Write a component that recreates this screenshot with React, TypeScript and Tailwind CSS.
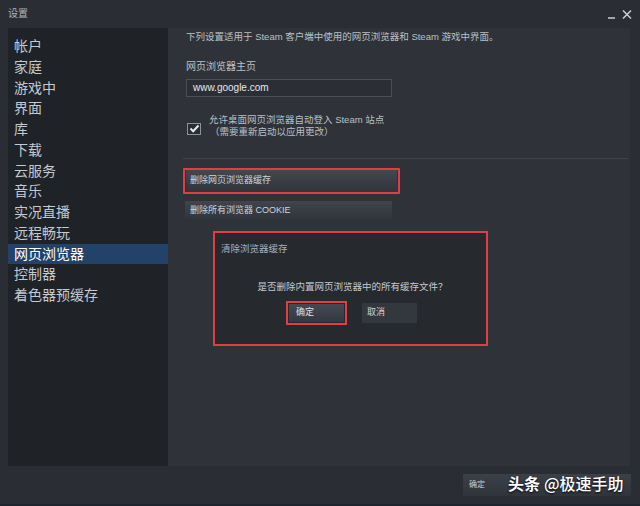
import React from "react";

const FONT = "font-['Liberation_Sans','Noto_Sans_CJK_SC',sans-serif]";

const navItems = [
  "帐户",
  "家庭",
  "游戏中",
  "界面",
  "库",
  "下载",
  "云服务",
  "音乐",
  "实况直播",
  "远程畅玩",
  "网页浏览器",
  "控制器",
  "着色器预缓存",
];

function CheckBox() {
  return (
    <div className="w-[14px] h-[12px] border border-[#8d939b] bg-[#2a2d33] flex items-center justify-center shrink-0">
      <svg width="11" height="9" viewBox="0 0 11 9">
        <path d="M1.5 4.5 L4.2 7.2 L9.5 1.5" stroke="#e8ecf0" strokeWidth="2" fill="none" />
      </svg>
    </div>
  );
}

export default function App() {
  const selected = "网页浏览器";
  return (
    <div className={`w-[640px] h-[506px] bg-[#2a2d33] flex flex-col border-b-2 border-[#1c2530] ${FONT}`}>
      {/* title bar */}
      <div className="h-[28px] flex items-center justify-between pl-[8px] pr-[8px] shrink-0">
        <span className="text-[10px] text-[#aeb5bd] leading-none">设置</span>
        <div className="flex items-end gap-[6px] h-[10px]">
          <svg width="8" height="10" viewBox="0 0 8 10">
            <path d="M0 9 H7" stroke="#c9ced4" strokeWidth="1.5" />
          </svg>
          <svg width="10" height="9" viewBox="0 0 10 9">
            <path d="M1 0.5 L9 8.5 M9 0.5 L1 8.5" stroke="#c9ced4" strokeWidth="1.5" />
          </svg>
        </div>
      </div>

      {/* main */}
      <div className="flex h-[438px] pl-[8px] pr-[10px] shrink-0">
        {/* sidebar */}
        <div className="w-[160px] bg-[#1f2226] pt-[8px] flex flex-col">
          {navItems.map((item) => {
            const isActive = item === selected;
            return (
              <div
                key={item}
                className={`h-[20.75px] leading-[20.75px] pl-[6px] text-[14px] ${
                  isActive ? "bg-[#23426a] text-white" : "text-[#c3cad2]"
                }`}
              >
                {item}
              </div>
            );
          })}
        </div>

        {/* content */}
        <div className="flex-1 bg-[#2f3239] pl-[18px] flex flex-col">
          <p className="mt-[2px] text-[9.5px] leading-[14px] text-[#b9c0c8]">
            下列设置适用于 Steam 客户端中使用的网页浏览器和 Steam 游戏中界面。
          </p>

          <p className="mt-[16px] text-[10px] leading-[14px] text-[#b9c0c8]">网页浏览器主页</p>

          <div className="mt-[4.5px] w-[206px] h-[18.5px] border border-[#4a4e56] bg-[#2b2e34] flex items-center pl-[6px]">
            <span className="text-[10px] text-[#e4e8ec]">www.google.com</span>
          </div>

          {/* checkbox */}
          <div className="mt-[17px] flex">
            <div className="pt-[8.5px] pl-[1px]">
              <CheckBox />
            </div>
            <div className="ml-[8px] flex flex-col text-[9.5px] leading-[12px] text-[#b9c0c8]">
              <span>允许桌面网页浏览器自动登入 Steam 站点</span>
              <span className="ml-[1px]">（需要重新启动以应用更改）</span>
            </div>
          </div>

          <div className="mt-[20px] -ml-[3px] mr-[2px] h-px bg-[#3f434a]" />

          {/* clear cache button (highlighted) */}
          <div className="mt-[9px] -ml-[3px] w-[217px] h-[26px] border-2 border-[#e23c44] px-[1px] rounded-[1px]">
            <div className="w-full h-full bg-gradient-to-b from-[#424852] to-[#30343b] flex items-center pl-[4px]">
              <span className="text-[9px] text-[#d0d5db]">删除网页浏览器缓存</span>
            </div>
          </div>

          <div className="mt-[7px] -ml-[1px] w-[207px] h-[18.5px] bg-gradient-to-b from-[#40454e] to-[#30343a] flex items-center pl-[5px]">
            <span className="text-[9px] text-[#d0d5db]">删除所有浏览器 COOKIE</span>
          </div>

          {/* dialog */}
          <div className="mt-[11.5px] ml-[27px] w-[275px] h-[115px] border-[2.5px] border-[#e23c44] bg-[#26292e] flex flex-col">
            <p className="pt-[10px] pl-[6px] text-[9.5px] leading-[12px] text-[#aab1b9]">清除浏览器缓存</p>
            <p className="mt-[25px] pl-[4px] text-center text-[9.5px] leading-[12px] text-[#c4cad1] font-['Noto_Sans_CJK_SC',sans-serif]">
              是否删除内置网页浏览器中的所有缓存文件？
            </p>
            <div className="mt-[9px] flex justify-center items-center gap-[15px] pl-[2px]">
              <div className="w-[61px] h-[24px] border-2 border-[#e23c44] p-[1px]">
                <div className="w-full h-full bg-gradient-to-b from-[#444a54] to-[#343840] flex items-center pl-[7px]">
                  <span className="text-[9px] text-[#dfe3e8]">确定</span>
                </div>
              </div>
              <div className="w-[55px] h-[20px] bg-[#33373e] flex items-center pl-[5px]">
                <span className="text-[9px] text-[#d0d5db]">取消</span>
              </div>
            </div>
          </div>
        </div>
      </div>

      {/* footer */}
      <div className="flex-1 flex justify-end items-start pt-[8px] pr-[9px]">
        <div className="relative w-[168px] h-[22px] bg-gradient-to-b from-[#3b4049] to-[#30343b] flex items-center pl-[6px]">
          <span className="text-[8px] text-[#c8ced5]">确定</span>
          <div className="absolute left-[45px] top-[-1px] flex items-center gap-[4px] text-white text-[16px] leading-[20px] [text-shadow:0_1px_2px_rgba(0,0,0,0.9)] font-['Noto_Sans_CJK_SC',sans-serif]">
            <span className="font-bold">头条</span>
            <span className="font-medium">@极速手助</span>
          </div>
        </div>
      </div>
    </div>
  );
}
